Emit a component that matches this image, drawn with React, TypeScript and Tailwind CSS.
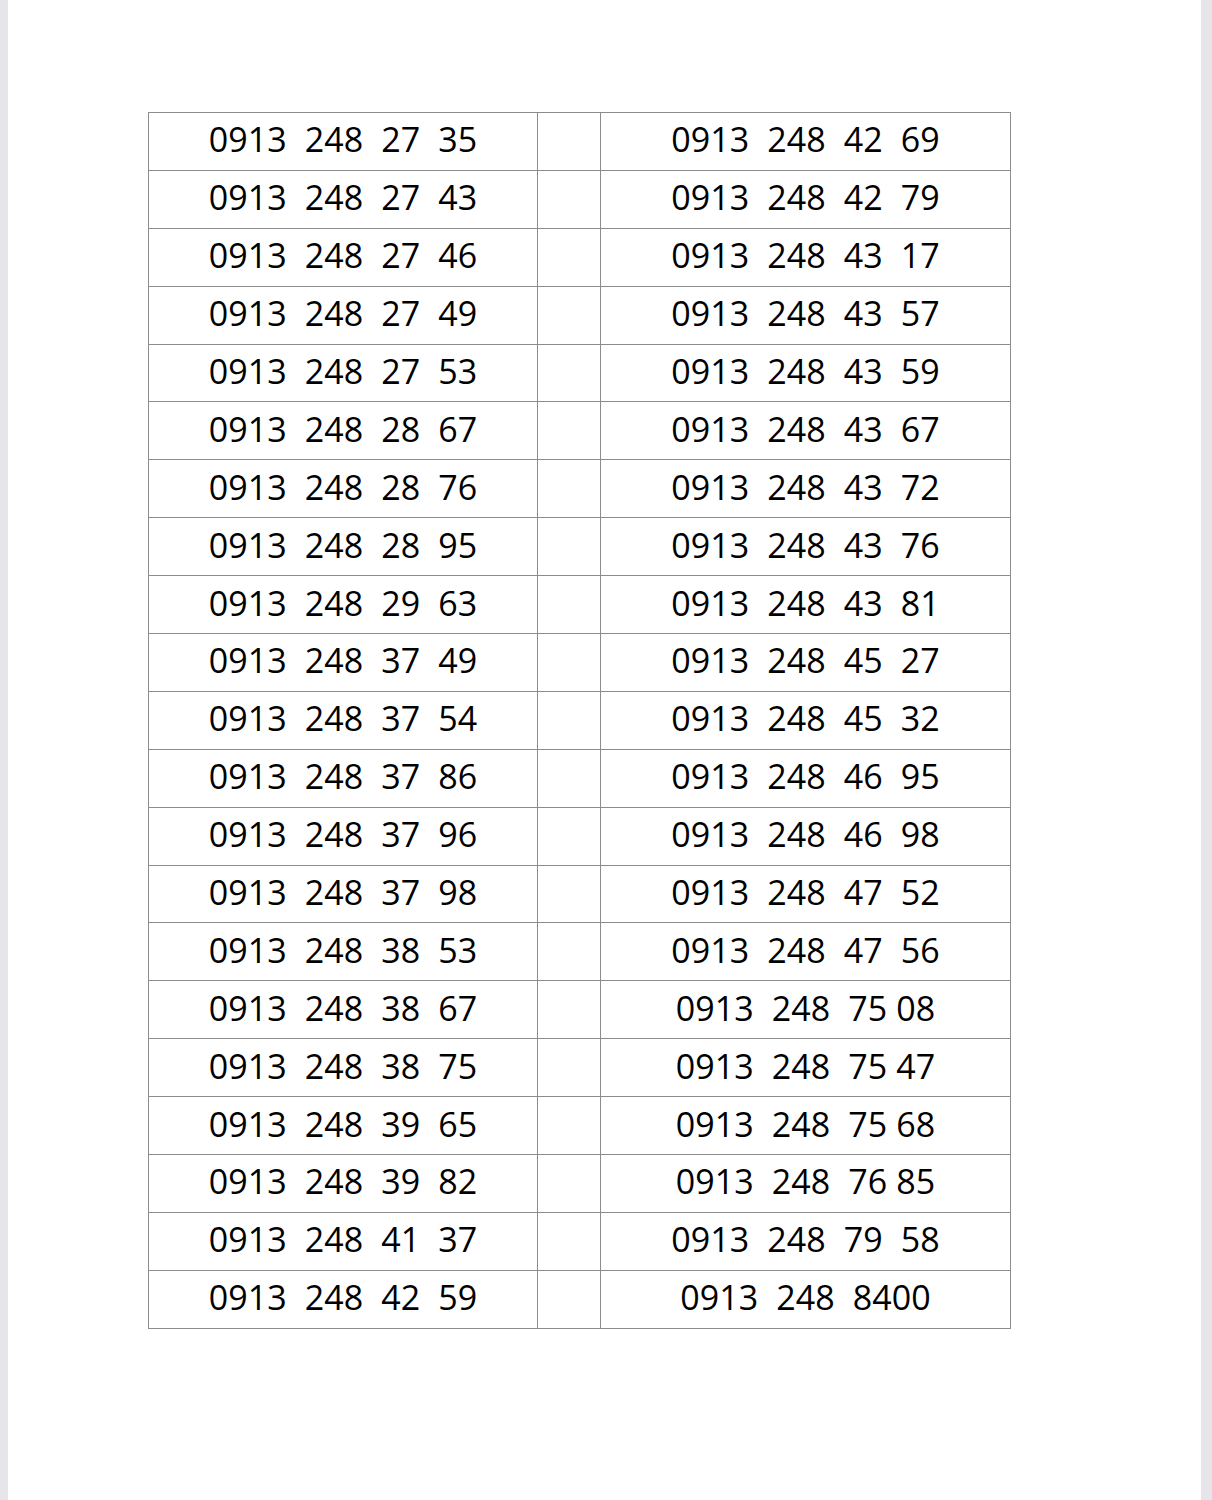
const left = [
  "0913  248  27  35",
  "0913  248  27  43",
  "0913  248  27  46",
  "0913  248  27  49",
  "0913  248  27  53",
  "0913  248  28  67",
  "0913  248  28  76",
  "0913  248  28  95",
  "0913  248  29  63",
  "0913  248  37  49",
  "0913  248  37  54",
  "0913  248  37  86",
  "0913  248  37  96",
  "0913  248  37  98",
  "0913  248  38  53",
  "0913  248  38  67",
  "0913  248  38  75",
  "0913  248  39  65",
  "0913  248  39  82",
  "0913  248  41  37",
  "0913  248  42  59",
];

const right = [
  "0913  248  42  69",
  "0913  248  42  79",
  "0913  248  43  17",
  "0913  248  43  57",
  "0913  248  43  59",
  "0913  248  43  67",
  "0913  248  43  72",
  "0913  248  43  76",
  "0913  248  43  81",
  "0913  248  45  27",
  "0913  248  45  32",
  "0913  248  46  95",
  "0913  248  46  98",
  "0913  248  47  52",
  "0913  248  47  56",
  "0913  248  75 08",
  "0913  248  75 47",
  "0913  248  75 68",
  "0913  248  76 85",
  "0913  248  79  58",
  "0913  248  8400",
];

export default function App() {
  return (
    <div className="flex h-[1500px] w-[1212px] bg-white">
      <div className="w-[8px] bg-[#e6e6ea]" />
      <div className="flex-1 pl-[140px] pt-[112px]">
        <table
          className="border-collapse text-black text-[34px] font-medium tracking-[0.1px]"
          style={{ fontFamily: '"Open Sans", "Noto Sans", sans-serif' }}
        >
          <tbody>
            {left.map((l, i) => (
              <tr key={i} className="h-[57.9px]">
                <td className="w-[389px] border border-[#8c8c8c] text-center whitespace-pre leading-none pb-[4px]">
                  {l}
                </td>
                <td className="w-[63px] border border-[#8c8c8c]" />
                <td className="w-[410px] border border-[#8c8c8c] text-center whitespace-pre leading-none pb-[4px]">
                  {right[i]}
                </td>
              </tr>
            ))}
          </tbody>
        </table>
      </div>
      <div className="w-[11px] bg-[#e6e6ea]" />
    </div>
  );
}
